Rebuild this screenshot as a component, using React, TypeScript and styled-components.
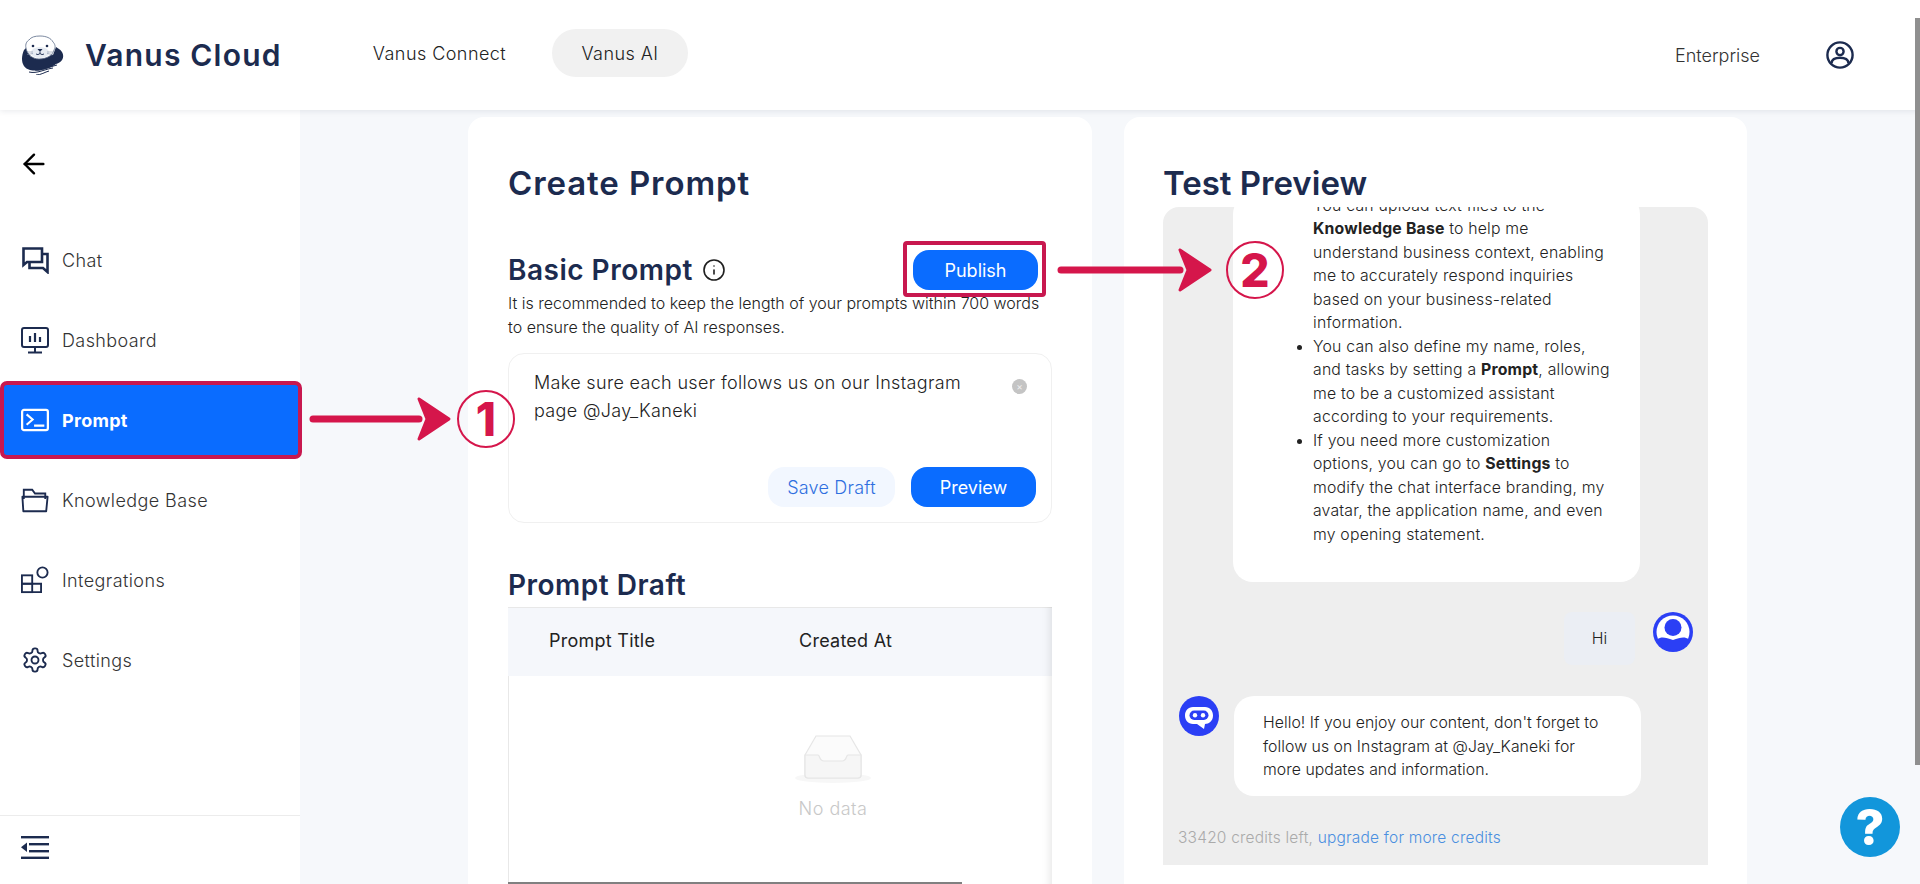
import React from 'react';
import styled, { createGlobalStyle } from 'styled-components';
import { ArrowLeft, Info } from 'lucide-react';

const Global = createGlobalStyle`
  html, body { margin: 0; padding: 0; height: 100%; overflow: hidden; background: #f6f8fb; }
  body { font-family: Inter, "Liberation Sans", sans-serif; color: #333; }
  * { box-sizing: border-box; }
  #root { height: 100%; }
`;

const Page = styled.div`
  position: relative;
  width: 1920px;
  height: 884px;
  overflow: hidden;
  display: flex;
  flex-direction: column;
`;

const Header = styled.header`
  height: 110px;
  flex: none;
  background: #fff;
  display: flex;
  align-items: center;
  padding: 0 66px 0 21px;
  box-shadow: 0 1px 6px rgba(30, 40, 70, 0.1);
  position: relative;
  z-index: 2;
`;
const Brand = styled.div`
  display: flex;
  align-items: center;
  gap: 20px;
  width: 331px;
  font-size: 30px;
  font-weight: 600;
  letter-spacing: 1.2px;
  color: #1c2b4f;
`;
const TopTab = styled.div<{ $active?: boolean }>`
  height: 48px;
  width: ${p => (p.$active ? '136px' : '135px')};
  margin-top: -4px;
  margin-left: ${p => (p.$active ? '45px' : '20px')};
  display: flex;
  align-items: center;
  justify-content: center;
  border-radius: 24px;
  font-size: 18px;
  font-weight: 300;
  letter-spacing: 0.45px;
  color: #222;
  white-space: nowrap;
  background: ${p => (p.$active ? '#f1f1f1' : 'transparent')};
`;
const HeaderRight = styled.div`
  margin-left: auto;
  display: flex;
  align-items: center;
  gap: 66px;
  font-size: 18px;
  font-weight: 300;
  color: #333;
`;

const Body = styled.div`
  flex: 1;
  display: flex;
  min-height: 0;
`;
const Sidebar = styled.aside`
  width: 300px;
  flex: none;
  background: #fff;
  display: flex;
  flex-direction: column;
`;
const BackRow = styled.div`
  height: 110px;
  padding: 38px 0 0 18px;
  color: #000;
  flex: none;
`;
const Nav = styled.nav`
  flex: 1;
  display: flex;
  flex-direction: column;
`;
const NavItem = styled.div<{ $active?: boolean }>`
  height: 80px;
  display: flex;
  align-items: center;
  gap: 13px;
  padding-left: 21px;
  font-size: 18px;
  font-weight: 300;
  letter-spacing: 0.4px;
  color: #333;
  ${p => p.$active && `
    width: 302px;
    height: 78px;
    margin: 1px 0;
    padding-left: 17px;
    background: #0a6cff;
    border: 4px solid #c8184f;
    border-radius: 7px;
    color: #fff;
    font-weight: 700;
    letter-spacing: 0.3px;
    position: relative;
    z-index: 1;
  `}
`;
const IconSlot = styled.span`
  width: 28px;
  height: 30px;
  display: flex;
  align-items: center;
  justify-content: center;
  flex: none;
  color: #1c2b4f;
`;
const ActiveSlot = styled(IconSlot)`
  color: #fff;
`;
const Collapse = styled.div`
  height: 69px;
  flex: none;
  border-top: 1px solid #ececec;
  padding: 20px 0 0 21px;
  color: #1c2b4f;
`;

const Main = styled.main`
  flex: 1;
  display: flex;
  gap: 32px;
  padding: 7px 0 0 168px;
  min-width: 0;
`;
const Card = styled.section<{ $w: number; $pad: number }>`
  width: ${p => p.$w}px;
  flex: none;
  background: #fff;
  border-radius: 16px 16px 0 0;
  padding: 42px 0 0 ${p => p.$pad}px;
  overflow: hidden;
`;
const LeftInner = styled.div`
  width: 544px;
`;
const H1 = styled.h1<{ $ls?: number }>`
  margin: 0;
  height: 48px;
  line-height: 48px;
  font-size: 33px;
  font-weight: 600;
  color: #1c2b4f;
  letter-spacing: ${p => p.$ls ?? 0}px;
`;
const RowBetween = styled.div`
  margin-top: 43px;
  height: 40px;
  display: flex;
  align-items: center;
  justify-content: space-between;
  padding-right: 14px;
`;
const H2Wrap = styled.div`
  display: flex;
  align-items: center;
  gap: 9px;
  color: #1f1f1f;
`;
const H2 = styled.h2`
  margin: 0;
  line-height: 36px;
  font-size: 28px;
  font-weight: 600;
  letter-spacing: 0.5px;
  color: #1c2b4f;
`;
const Button = styled.div<{ $w: number; $ghost?: boolean }>`
  width: ${p => p.$w}px;
  height: 40px;
  border-radius: 16px;
  display: flex;
  align-items: center;
  justify-content: center;
  font-size: 18px;
  font-weight: ${p => (p.$ghost ? 300 : 400)};
  letter-spacing: ${p => (p.$ghost ? '0.2px' : '0')};
  background: ${p => (p.$ghost ? '#f2f7ff' : '#0a6cff')};
  color: ${p => (p.$ghost ? '#2f6fe0' : '#fff')};
`;
const Desc = styled.p`
  margin: 1px 0 0;
  font-size: 16px;
  font-weight: 300;
  line-height: 24px;
  color: #222;
  white-space: nowrap;
`;
const Prompt = styled.div`
  margin-top: 14px;
  height: 170px;
  border: 1px solid #f0f0f0;
  border-radius: 16px;
  padding: 15px 15px 15px 25px;
  display: flex;
  flex-direction: column;
`;
const PromptTop = styled.div`
  flex: 1;
  display: flex;
  justify-content: space-between;
`;
const PromptText = styled.div`
  font-size: 18px;
  font-weight: 300;
  line-height: 28px;
  letter-spacing: 0.33px;
  color: #222;
  white-space: nowrap;
`;
const Clear = styled.span`
  width: 15px;
  height: 15px;
  margin: 10px 9px 0 0;
  border-radius: 50%;
  background: #c4c4c4;
  color: #eee;
  font-size: 10px;
  line-height: 14px;
  text-align: center;
`;
const PromptActions = styled.div`
  display: flex;
  justify-content: flex-end;
  gap: 16px;
`;
const DraftTitle = styled(H2)`
  margin-top: 44px;
`;
const Table = styled.div`
  margin-top: 4px;
  height: 277px;
  position: relative;
  box-shadow: inset -10px 0 8px -8px rgba(0, 0, 0, 0.1), inset 1px 0 0 #e8e8e8;
  border-radius: 2px 2px 0 0;
  display: flex;
  flex-direction: column;
`;
const THead = styled.div`
  height: 69px;
  flex: none;
  background: #f5f7fb;
  display: grid;
  grid-template-columns: 250px 1fr;
  align-items: center;
  padding: 0 0 3px 41px;
  font-size: 18px;
  font-weight: 400;
  letter-spacing: 0.25px;
  color: #222;
  box-shadow: inset -10px 0 8px -8px rgba(0, 0, 0, 0.1), inset 0 1px 0 #e8e8e8;
`;
const Empty = styled.div`
  flex: 1;
  display: flex;
  flex-direction: column;
  align-items: center;
  padding: 59px 0 0 106px;
  color: #c8c8c8;
  font-size: 18px;
  font-weight: 300;
  line-height: 24px;
  letter-spacing: 0.5px;
`;
const EmptyLabel = styled.div`
  margin-top: 14px;
`;
const HBar = styled.div`
  position: absolute;
  left: 0;
  bottom: 0;
  width: 454px;
  height: 2px;
  background: #808080;
`;

const Chat = styled.div`
  width: 545px;
  height: 658px;
  background: #eee;
  border-radius: 16px 16px 0 0;
  overflow: hidden;
  display: flex;
  flex-direction: column;
  justify-content: flex-end;
  padding-bottom: 15px;
  font-size: 15.8px;
  font-weight: 300;
  line-height: 23.5px;
  color: #222;
  white-space: nowrap;
  b { font-weight: 700; }
`;
const Bubble = styled.div`
  width: 407px;
  flex: none;
  background: #fff;
  border-radius: 20px;
`;
const LongBubble = styled(Bubble)`
  margin-left: 70px;
  padding-bottom: 36px;
`;
const List = styled.ul`
  margin: 0;
  padding: 0 0 0 80px;
  letter-spacing: 0.2px;
  li::marker { font-size: 14px; }
  li:first-child::marker { color: transparent; }
`;
const HiRow = styled.div`
  margin-top: 30px;
  display: flex;
  justify-content: flex-end;
  gap: 18px;
  padding-right: 15px;
  flex: none;
`;
const HiBubble = styled.div`
  width: 71px;
  height: 53px;
  border-radius: 8px;
  background: #ebeef4;
  display: flex;
  align-items: center;
  justify-content: center;
`;
const BotRow = styled.div`
  margin-top: 31px;
  display: flex;
  gap: 15px;
  padding-left: 16px;
  flex: none;
`;
const ReplyBubble = styled(Bubble)`
  padding: 15px 0 0 29px;
  height: 100px;
  letter-spacing: 0.05px;
`;
const Credits = styled.div`
  margin-top: 30px;
  padding-left: 15px;
  font-size: 15.5px;
  line-height: 24px;
  letter-spacing: 0.2px;
  color: #aaa;
  flex: none;
`;
const Upgrade = styled.span`
  color: #4a8fe0;
`;

const Overlay = styled.svg`
  position: absolute;
  inset: 0;
  z-index: 5;
  pointer-events: none;
`;
const PublishBox = styled.div`
  position: relative;
  &::after {
    content: '';
    position: absolute;
    left: -10px;
    right: -8px;
    top: -9px;
    bottom: -7px;
    border: 4px solid #c8184f;
    border-radius: 4px;
  }
`;
const Scrollbar = styled.div`
  position: absolute;
  right: 0;
  top: 18px;
  width: 5px;
  height: 747px;
  background: #8f8f8f;
  z-index: 6;
`;
const Help = styled.div`
  position: absolute;
  left: 1840px;
  top: 797px;
  width: 60px;
  height: 60px;
  border-radius: 50%;
  background: #1296db;
  color: #fff;
  font-size: 50px;
  font-weight: 800;
  line-height: 60px;
  text-align: center;
  z-index: 6;
`;

const Otter = () => (
  <svg width="44" height="40" viewBox="0 0 44 40">
    <path d="M3 15 C-1 24 1 33 9 35 C18 37 30 33 35 29 C41 28 44 22 41 17 C39 14 36 13 35 12 L32 20 L10 22 L5 13 Z" fill="#1c2b4f" />
    <path d="M5 13 C4 9 6 6 8 5 C10 2 14 1 19 1 C25 1 30 3 32 7 C34 9 35 12 33 15 C32 20 26 24 18 24 C11 24 6 19 5 13 Z" fill="#fff" stroke="#5a6b88" strokeWidth="0.8" />
    <ellipse cx="19" cy="17.5" rx="9" ry="5.5" fill="#e6ebf2" />
    <circle cx="12" cy="11" r="1.3" fill="#1c2b4f" />
    <circle cx="26" cy="11" r="1.3" fill="#1c2b4f" />
    <path d="M16.5 14 h5 l-2.5 3 Z" fill="#1c2b4f" />
    <path d="M19 17 v1.5 M15 19 q2 1.5 4 -.5 q2 2 4 .5" stroke="#1c2b4f" strokeWidth="0.9" fill="none" />
    <path d="M6 17 h6 M6 19.5 l6 -1 M26 17 h6 M26 18.5 l6 1" stroke="#7d8aa3" strokeWidth="0.6" />
    <path d="M14 35 C20 36 28 32 36 30 M8 37 C16 39 24 34 32 33 M15 40 C20 40 24 37 28 36" stroke="#1c2b4f" strokeWidth="1" fill="none" />
  </svg>
);

const P = { fill: 'none', stroke: 'currentColor', strokeWidth: 2 } as const;

const ChatIcon = () => (
  <svg width="27" height="27" viewBox="0 0 27 27" {...P} strokeWidth={2.6}>
    <path d="M1.5 18 V1.5 H20 V15 H5 Z" />
    <path d="M20 7 H25.5 V25 L21 21 H7.5 V15" />
  </svg>
);
const DashIcon = () => (
  <svg width="28" height="27" viewBox="0 0 28 27" {...P}>
    <rect x="1" y="1" width="26" height="19" rx="2" />
    <path d="M14 20 V25 M7 25.5 H21" />
    <path d="M9 9 V15 M14 6 V15 M19 10 V15" strokeWidth={2.2} />
  </svg>
);
const TermIcon = () => (
  <svg width="30" height="24" viewBox="0 0 30 24" {...P} strokeWidth={2.4}>
    <rect x="1.2" y="1.2" width="27.6" height="21.6" rx="2" />
    <path d="M6 6 L12.5 11.5 L6 17 M14 18 H25" strokeWidth={2.2} />
  </svg>
);
const FolderIcon = () => (
  <svg width="30" height="26" viewBox="0 0 30 26" {...P}>
    <path d="M3 12 V2 H12 L15 6 H26 V12" />
    <path d="M1.5 9.5 H28.5 L27 25 H2.5 Z" strokeLinejoin="round" />
  </svg>
);
const IntegrationIcon = () => (
  <svg width="30" height="28" viewBox="0 0 30 28" {...P}>
    <rect x="1" y="9" width="11" height="9" />
    <rect x="1" y="18" width="11" height="9" />
    <path d="M12 18 H21.5 V27 H12" />
    <circle cx="23" cy="6" r="5.5" />
  </svg>
);
const GearIcon = () => (
  <svg width="30" height="30" viewBox="0 0 24 24" {...P} strokeWidth={1.6} strokeLinejoin="round">
    <path d="M12.22 2h-.44a2 2 0 0 0-2 2v.18a2 2 0 0 1-1 1.73l-.43.25a2 2 0 0 1-2 0l-.15-.08a2 2 0 0 0-2.73.73l-.22.38a2 2 0 0 0 .73 2.73l.15.1a2 2 0 0 1 1 1.72v.51a2 2 0 0 1-1 1.74l-.15.09a2 2 0 0 0-.73 2.73l.22.38a2 2 0 0 0 2.73.73l.15-.08a2 2 0 0 1 2 0l.43.25a2 2 0 0 1 1 1.73V20a2 2 0 0 0 2 2h.44a2 2 0 0 0 2-2v-.18a2 2 0 0 1 1-1.73l.43-.25a2 2 0 0 1 2 0l.15.08a2 2 0 0 0 2.73-.73l.22-.39a2 2 0 0 0-.73-2.73l-.15-.08a2 2 0 0 1-1-1.74v-.5a2 2 0 0 1 1-1.74l.15-.09a2 2 0 0 0 .73-2.73l-.22-.38a2 2 0 0 0-2.73-.73l-.15.08a2 2 0 0 1-2 0l-.43-.25a2 2 0 0 1-1-1.73V4a2 2 0 0 0-2-2z" />
    <circle cx="12" cy="12" r="3" />
  </svg>
);
const CollapseIcon = () => (
  <svg width="28" height="23" viewBox="0 0 28 23" fill="currentColor">
    <rect x="0" y="0" width="28" height="2.4" />
    <rect x="8" y="7" width="20" height="2.4" />
    <rect x="8" y="14" width="20" height="2.4" />
    <rect x="0" y="20.6" width="28" height="2.4" />
    <path d="M6 6.5 V16 L0 11.2 Z" />
  </svg>
);
const UserIcon = () => (
  <svg width="28" height="28" viewBox="0 0 28 28" fill="none" stroke="#1c2b4f" strokeWidth="2.4">
    <circle cx="14" cy="14" r="12.6" />
    <circle cx="14" cy="10.5" r="3.6" />
    <path d="M5.5 22 C6 18 10 16.8 14 16.8 C18 16.8 22 18 22.5 22" />
  </svg>
);
const InboxIcon = () => (
  <svg width="78" height="48" viewBox="0 0 78 48">
    <ellipse cx="39" cy="43" rx="38" ry="5" fill="#f7f7f7" />
    <path d="M11 20 L22 1 H56 L67 20 V40 a3 3 0 0 1 -3 3 H14 a3 3 0 0 1 -3 -3 Z" fill="#fbfbfb" stroke="#e6e6e6" strokeWidth="1.2" />
    <path d="M11 20 H24 C26 20 25 26 30 26 H48 C53 26 52 20 54 20 H67 V40 a3 3 0 0 1 -3 3 H14 a3 3 0 0 1 -3 -3 Z" fill="#f6f6f6" stroke="#e6e6e6" strokeWidth="1.2" />
  </svg>
);
const UserAvatar = () => (
  <svg width="40" height="40" viewBox="0 0 40 40">
    <circle cx="20" cy="20" r="20" fill="#2b3ff5" />
    <circle cx="20" cy="20" r="16.5" fill="#fff" />
    <circle cx="20" cy="15.5" r="8.5" fill="#2b3ff5" />
    <path d="M4 27.5 C9 24 13 26 20 28 C27 26 31 24 36 27.5 C32 36 26 38 20 38 C14 38 8 36 4 27.5 Z" fill="#2b3ff5" />
  </svg>
);
const BotAvatar = () => (
  <svg width="40" height="40" viewBox="0 0 40 40" style={{ flex: 'none' }}>
    <circle cx="20" cy="20" r="20" fill="#2b3ff5" />
    <path d="M14 11 H26 C31 11 34 15 34 19.5 C34 25 30 28 26 28 L25 33 L18 28 H14 C9 28 6 24 6 19.5 C6 15 9 11 14 11 Z" fill="#fff" />
    <rect x="10.5" y="14.5" width="19" height="9.5" rx="4.7" fill="#2b3ff5" />
    <circle cx="16" cy="19.2" r="2.2" fill="#fff" />
    <circle cx="24" cy="19.2" r="2.2" fill="#fff" />
  </svg>
);

const ArrowPath = ({ x1, x2, y, y2 }: { x1: number; x2: number; y: number; y2: number }) => (
  <g fill="none" stroke="#d5164b" strokeLinecap="round" strokeLinejoin="round">
    <path d={`M${x1} ${y} L${x2 - 30} ${y2}`} strokeWidth="7" />
    <path d={`M${x2 - 30} ${y - 20} L${x2} ${y2} L${x2 - 30} ${y2 + 20} L${x2 - 22} ${y2} Z`} fill="#d5164b" strokeWidth="3" />
  </g>
);

export default function App() {
  return (
    <Page>
      <Global />
      <Header>
        <Brand><Otter />Vanus Cloud</Brand>
        <TopTab>Vanus Connect</TopTab>
        <TopTab $active>Vanus AI</TopTab>
        <HeaderRight>Enterprise<UserIcon /></HeaderRight>
      </Header>
      <Body>
        <Sidebar>
          <BackRow><ArrowLeft size={32} strokeWidth={1.8} /></BackRow>
          <Nav>
            <NavItem><IconSlot><ChatIcon /></IconSlot>Chat</NavItem>
            <NavItem><IconSlot><DashIcon /></IconSlot>Dashboard</NavItem>
            <NavItem $active><ActiveSlot><TermIcon /></ActiveSlot>Prompt</NavItem>
            <NavItem><IconSlot><FolderIcon /></IconSlot>Knowledge Base</NavItem>
            <NavItem><IconSlot><IntegrationIcon /></IconSlot>Integrations</NavItem>
            <NavItem><IconSlot><GearIcon /></IconSlot>Settings</NavItem>
          </Nav>
          <Collapse><CollapseIcon /></Collapse>
        </Sidebar>
        <Main>
          <Card $w={624} $pad={40}>
            <LeftInner>
              <H1 $ls={0.9}>Create Prompt</H1>
              <RowBetween>
                <H2Wrap><H2>Basic Prompt</H2><Info size={24} strokeWidth={1.6} /></H2Wrap>
                <PublishBox><Button $w={125}>Publish</Button></PublishBox>
              </RowBetween>
              <Desc>
                It is recommended to keep the length of your prompts within 700 words<br />
                to ensure the quality of AI responses.
              </Desc>
              <Prompt>
                <PromptTop>
                  <PromptText>Make sure each user follows us on our Instagram<br />page @Jay_Kaneki</PromptText>
                  <Clear>×</Clear>
                </PromptTop>
                <PromptActions>
                  <Button $w={127} $ghost>Save Draft</Button>
                  <Button $w={125}>Preview</Button>
                </PromptActions>
              </Prompt>
              <DraftTitle>Prompt Draft</DraftTitle>
              <Table>
                <THead><span>Prompt Title</span><span>Created At</span></THead>
                <Empty><InboxIcon /><EmptyLabel>No data</EmptyLabel></Empty>
                <HBar />
              </Table>
            </LeftInner>
          </Card>
          <Card $w={623} $pad={39}>
            <H1>Test Preview</H1>
            <Chat>
              <LongBubble>
                <List>
                  <li>You can upload text files to the<br /><b>Knowledge Base</b> to help me<br />understand business context, enabling<br />me to accurately respond inquiries<br />based on your business-related<br />information.</li>
                  <li>You can also define my name, roles,<br />and tasks by setting a <b>Prompt</b>, allowing<br />me to be a customized assistant<br />according to your requirements.</li>
                  <li>If you need more customization<br />options, you can go to <b>Settings</b> to<br />modify the chat interface branding, my<br />avatar, the application name, and even<br />my opening statement.</li>
                </List>
              </LongBubble>
              <HiRow><HiBubble>Hi</HiBubble><UserAvatar /></HiRow>
              <BotRow>
                <BotAvatar />
                <ReplyBubble>Hello! If you enjoy our content, don't forget to<br />follow us on Instagram at @Jay_Kaneki for<br />more updates and information.</ReplyBubble>
              </BotRow>
              <Credits>33420 credits left, <Upgrade>upgrade for more credits</Upgrade></Credits>
            </Chat>
          </Card>
        </Main>
      </Body>
      <Overlay width="1920" height="884" viewBox="0 0 1920 884">
        <ArrowPath x1={313} x2={449} y={419} y2={419} />
        <ellipse cx="486" cy="419" rx="28" ry="28" fill="none" stroke="#d5164b" strokeWidth="2" />
        <text x="486" y="436" textAnchor="middle" fontFamily="Inter, sans-serif" fontWeight="800" fontSize="46" fill="#d5164b">1</text>
        <ArrowPath x1={1061} x2={1210} y={270} y2={270} />
        <ellipse cx="1255" cy="270" rx="28" ry="28" fill="none" stroke="#d5164b" strokeWidth="2" />
        <text x="1255" y="287" textAnchor="middle" fontFamily="Inter, sans-serif" fontWeight="800" fontSize="46" fill="#d5164b">2</text>
      </Overlay>
      <Scrollbar />
      <Help>?</Help>
    </Page>
  );
}
